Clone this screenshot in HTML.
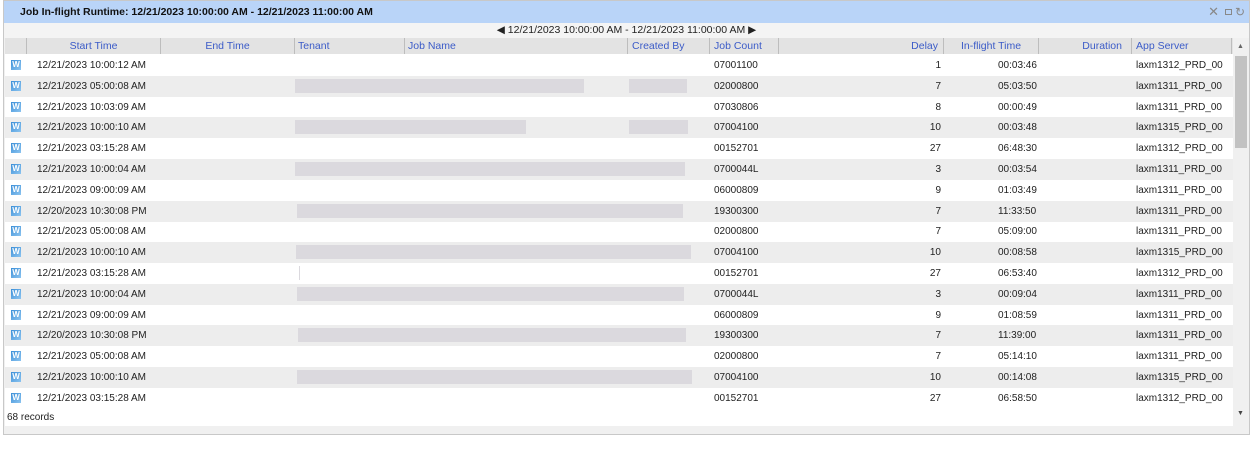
<!DOCTYPE html>
<html><head><meta charset="utf-8"><style>
*{margin:0;padding:0;box-sizing:border-box}
body{width:1252px;height:460px;background:#fff;font-family:"Liberation Sans",sans-serif;font-size:10px;color:#222;position:relative;overflow:hidden}
.win{position:absolute;left:3px;top:0;width:1247px;height:435px;border:1px solid #c8c8c8;background:#f0f0f0}
.title{position:absolute;left:0;top:0;width:100%;height:22px;background:#b9d4f8;font-weight:bold;font-size:10.5px;line-height:22px;padding-left:16px;color:#111}
.nav{position:absolute;left:0;top:22px;width:100%;height:15px;background:#f4f4f4;text-align:center;font-size:10.5px;line-height:15px}
.grid{position:absolute;left:1px;top:37px;width:1228px;height:371px;background:#fff;overflow:hidden}
.hdr{position:absolute;left:0;top:0;height:16px;width:100%;background:#e3e3e3}
.hc{position:absolute;top:0;height:16px;border-right:1px solid #bdbdbd;color:#3b5bc8;font-size:10.5px;line-height:16px;white-space:nowrap}
.row{position:absolute;left:0;width:100%;height:21px}
.row.alt{background:#ededed}
.c{position:absolute;top:0;line-height:21px;font-size:10px;white-space:nowrap}
.r{text-align:right}
.bar{position:absolute;top:3px;height:14px;background:#dbd9de}
.ic{position:absolute;left:6px;top:5px;width:10px;height:10px;background:linear-gradient(135deg,#3b8fd8,#8cc4f0);color:#fff;font-size:8px;line-height:10px;text-align:center;font-weight:bold}
.sb{position:absolute;left:1229px;top:37px;width:16px;height:388px;background:#f0f0f0}
.th{position:absolute;left:2px;top:18px;width:12px;height:92px;background:#c2c2c2}
.foot{position:absolute;left:1px;top:408px;width:1228px;height:17px;background:#fff;font-size:10px;line-height:17px;padding-left:2px}
</style></head><body>
<div class="win">
<div class="title">Job In-flight Runtime: 12/21/2023 10:00:00 AM - 12/21/2023 11:00:00 AM
<span style="position:absolute;right:30px;top:0;color:#888;font-weight:normal;font-size:13px">✕</span>
<span style="position:absolute;right:17px;top:8px;width:7px;height:6px;border:1px solid #888"></span>
<span style="position:absolute;right:4px;top:0;color:#888;font-weight:normal;font-size:12px">↻</span></div>
<div class="nav">◀ 12/21/2023 10:00:00 AM - 12/21/2023 11:00:00 AM ▶</div>
<div class="grid">
<div class="hdr">
<div class="hc" style="left:0;width:22px"></div>
<div class="hc" style="left:22px;width:134px;text-align:center">Start Time</div>
<div class="hc" style="left:156px;width:134px;text-align:center">End Time</div>
<div class="hc" style="left:290px;width:110px;padding-left:3px">Tenant</div>
<div class="hc" style="left:400px;width:223px;padding-left:3px">Job Name</div>
<div class="hc" style="left:623px;width:82px;padding-left:4px">Created By</div>
<div class="hc" style="left:705px;width:69px;padding-left:4px">Job Count</div>
<div class="hc" style="left:774px;width:165px;text-align:right;padding-right:5px">Delay</div>
<div class="hc" style="left:939px;width:95px;text-align:center">In-flight Time</div>
<div class="hc" style="left:1034px;width:93px;text-align:right;padding-right:9px">Duration</div>
<div class="hc" style="left:1127px;width:100px;padding-left:4px">App Server</div>
</div>
<div id="rows"></div>
</div>
<div class="sb"><span style="position:absolute;left:4px;top:5px;font-size:7px;color:#666">▲</span><div class="th"></div><span style="position:absolute;left:4px;top:372px;font-size:7px;color:#444">▼</span></div>
<div class="foot">68 records</div>
</div>
<script>
var d=[
["12/21/2023 10:00:12 AM","07001100",1,"00:03:46","laxm1312_PRD_00",null],
["12/21/2023 05:00:08 AM","02000800",7,"05:03:50","laxm1311_PRD_00",[290,579,624,682]],
["12/21/2023 10:03:09 AM","07030806",8,"00:00:49","laxm1311_PRD_00",null],
["12/21/2023 10:00:10 AM","07004100",10,"00:03:48","laxm1315_PRD_00",[290,521,624,683]],
["12/21/2023 03:15:28 AM","00152701",27,"06:48:30","laxm1312_PRD_00",null],
["12/21/2023 10:00:04 AM","0700044L",3,"00:03:54","laxm1311_PRD_00",[290,680]],
["12/21/2023 09:00:09 AM","06000809",9,"01:03:49","laxm1311_PRD_00",null],
["12/20/2023 10:30:08 PM","19300300",7,"11:33:50","laxm1311_PRD_00",[292,678]],
["12/21/2023 05:00:08 AM","02000800",7,"05:09:00","laxm1311_PRD_00",null],
["12/21/2023 10:00:10 AM","07004100",10,"00:08:58","laxm1315_PRD_00",[291,686]],
["12/21/2023 03:15:28 AM","00152701",27,"06:53:40","laxm1312_PRD_00",[294,295]],
["12/21/2023 10:00:04 AM","0700044L",3,"00:09:04","laxm1311_PRD_00",[292,679]],
["12/21/2023 09:00:09 AM","06000809",9,"01:08:59","laxm1311_PRD_00",null],
["12/20/2023 10:30:08 PM","19300300",7,"11:39:00","laxm1311_PRD_00",[293,681]],
["12/21/2023 05:00:08 AM","02000800",7,"05:14:10","laxm1311_PRD_00",null],
["12/21/2023 10:00:10 AM","07004100",10,"00:14:08","laxm1315_PRD_00",[292,687]],
["12/21/2023 03:15:28 AM","00152701",27,"06:58:50","laxm1312_PRD_00",null]];
var h="";
d.forEach(function(r,i){
var b="";if(r[5]){for(var k=0;k<r[5].length;k+=2)b+='<div class="bar" style="left:'+r[5][k]+'px;width:'+(r[5][k+1]-r[5][k])+'px"></div>';}
h+='<div class="row'+(i%2?' alt':'')+'" style="top:'+(17+i*20.8)+'px"><div class="ic">W</div>'+b+
'<div class="c" style="left:32px">'+r[0]+'</div>'+
'<div class="c" style="left:709px">'+r[1]+'</div>'+
'<div class="c r" style="left:774px;width:162px">'+r[2]+'</div>'+
'<div class="c" style="left:993px">'+r[3]+'</div>'+
'<div class="c" style="left:1131px">'+r[4]+'</div></div>';});
document.getElementById("rows").innerHTML=h;
</script>
</body></html>
